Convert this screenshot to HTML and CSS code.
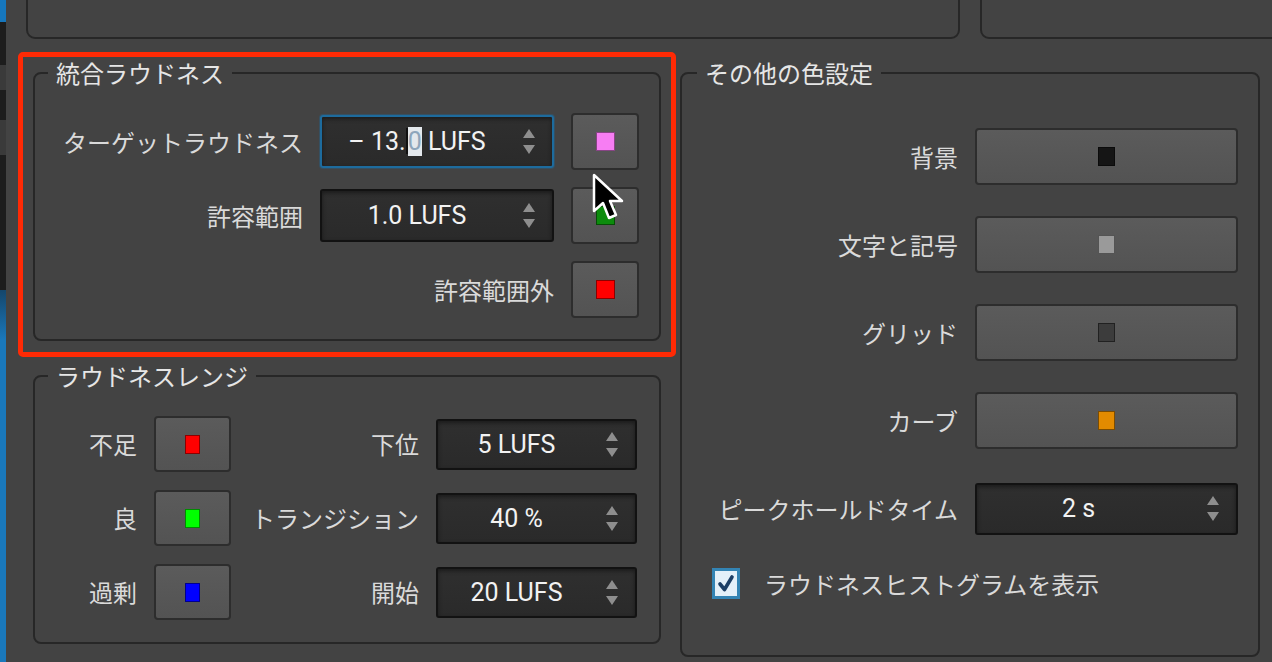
FILE: index.html
```html
<!DOCTYPE html>
<html>
<head>
  <meta charset="utf-8">
  <link rel="stylesheet" href="styles.css">
</head>
<body>
  <div class="window">
    <div class="edge"></div>

    <div class="content">
      <div class="top-row">
        <div class="top-panel left"></div>
        <div class="top-panel right"></div>
      </div>

      <div class="columns">
        <div class="col-left">
          <div class="highlight">
            <fieldset class="group">
              <legend>統合ラウドネス</legend>
              <div class="rows rows-int">
                <span class="label">ターゲットラウドネス</span>
                <div class="spin focused">
                  <span class="val">– 13.<span class="caret"></span><span class="sel">0</span> LUFS</span>
                  <span class="arrows"><i class="up"></i><i class="down"></i></span>
                </div>
                <button class="color-btn"><span class="swatch" style="background:#f77df3"></span></button>

                <span class="label">許容範囲</span>
                <div class="spin">
                  <span class="val">1.0 LUFS</span>
                  <span class="arrows"><i class="up"></i><i class="down"></i></span>
                </div>
                <button class="color-btn"><span class="swatch" style="background:#0c8c0c"></span></button>

                <span class="label wide">許容範囲外</span>
                <button class="color-btn"><span class="swatch" style="background:#ff0000"></span></button>
              </div>
            </fieldset>
          </div>

          <fieldset class="group g-range">
            <legend>ラウドネスレンジ</legend>
            <div class="rows rows-range">
              <span class="label">不足</span>
              <button class="color-btn"><span class="swatch small" style="background:#ff0000"></span></button>
              <span class="label">下位</span>
              <div class="spin">
                <span class="val">5 LUFS</span>
                <span class="arrows"><i class="up"></i><i class="down"></i></span>
              </div>

              <span class="label">良</span>
              <button class="color-btn"><span class="swatch small" style="background:#00ff00"></span></button>
              <span class="label">トランジション</span>
              <div class="spin">
                <span class="val">40 %</span>
                <span class="arrows"><i class="up"></i><i class="down"></i></span>
              </div>

              <span class="label">過剰</span>
              <button class="color-btn"><span class="swatch small" style="background:#0000ff"></span></button>
              <span class="label">開始</span>
              <div class="spin">
                <span class="val">20 LUFS</span>
                <span class="arrows"><i class="up"></i><i class="down"></i></span>
              </div>
            </div>
          </fieldset>
        </div>

        <fieldset class="group g-other">
          <legend>その他の色設定</legend>
          <div class="rows rows-other">
            <span class="label">背景</span>
            <button class="color-btn"><span class="swatch mid" style="background:#151515"></span></button>

            <span class="label">文字と記号</span>
            <button class="color-btn"><span class="swatch mid" style="background:#9a9a9a"></span></button>

            <span class="label">グリッド</span>
            <button class="color-btn"><span class="swatch mid" style="background:#3c3c3c"></span></button>

            <span class="label">カーブ</span>
            <button class="color-btn"><span class="swatch mid" style="background:#e38b00"></span></button>

            <span class="label">ピークホールドタイム</span>
            <div class="spin spin-wide">
              <span class="val">2 s</span>
              <span class="arrows"><i class="up"></i><i class="down"></i></span>
            </div>

            <label class="check-row">
              <svg class="checkbox" width="28" height="31" viewBox="0 0 28 31">
                <rect x="1.5" y="1.5" width="25" height="28" fill="#e3f0f9" stroke="#3384b4" stroke-width="3"/>
                <path d="M8 16 L12.5 21.5 L20 9" fill="none" stroke="#1c3f66" stroke-width="3.6" stroke-linecap="round" stroke-linejoin="round"/>
              </svg>
              <span>ラウドネスヒストグラムを表示</span>
            </label>
          </div>
        </fieldset>
      </div>
    </div>

    <svg class="cursor" width="36" height="52" viewBox="-2 -2 36 52">
      <path d="M0 0 L0 36 L9 28 L15 43 L22 40 L16 26 L28 26 Z" fill="#000" stroke="#fff" stroke-width="2.5" stroke-linejoin="round"/>
    </svg>
  </div>
</body>
</html>
```

FILE: styles.css
```css
body {
  margin: 0;
  background: #434343;
  font-family: "Noto Sans CJK JP", sans-serif;
  color: #dcdcdc;
  overflow: hidden;
}

.window {
  display: flex;
  height: 662px;
  position: relative;
  overflow: hidden;
}

.edge {
  width: 6px;
  flex-shrink: 0;
  background: linear-gradient(#1677bd 0, #1677bd 22px, #1d1d1d 22px, #1d1d1d 65px, #3a3a3a 65px, #3a3a3a 90px,
    #1d1d1d 90px, #1d1d1d 120px, #3a3a3a 120px, #3a3a3a 155px, #1d1d1d 155px, #1d1d1d 290px,
    #15466b 290px, #1a78bb 340px, #1a78bb 662px);
}

.content {
  flex: 1;
  min-width: 0;
}

.top-row {
  display: flex;
  gap: 20px;
  height: 69px;
  margin: -30px -20px 0 20px;
}

.top-panel {
  border: 2px solid #272727;
  border-radius: 0 0 9px 9px;
  box-sizing: border-box;
}

.top-panel.left {
  width: 934px;
}

.top-panel.right {
  flex: 1;
}

.columns {
  display: flex;
  align-items: flex-start;
  margin-top: 13px;
  padding-left: 12px;
}

.col-left {
  width: 658px;
  flex-shrink: 0;
}

.highlight {
  border: 5px solid #ff2a05;
  border-radius: 5px;
  padding: 1px 10px 11px;
}

fieldset.group {
  margin: 0;
  padding: 0;
  min-width: 0;
  border: 2px solid #272727;
  border-radius: 8px;
}

legend {
  margin-left: 13px;
  padding: 0 8px;
  font-size: 24px;
  line-height: 30px;
  color: #e6e6e6;
}

.g-range {
  margin: 4px 15px 0 !important;
}

.g-other {
  width: 580px;
  box-sizing: border-box;
  margin: 6px 0 0 4px !important;
}

.g-other legend {
  margin-left: 15px;
}

.rows {
  display: grid;
  align-items: center;
}

.rows-int {
  grid-template-columns: 1fr 234px 68px;
  grid-auto-rows: 57px;
  column-gap: 17px;
  row-gap: 17px;
  padding: 25px 20px 21px 0;
}

.rows-range {
  grid-template-columns: 102px 77px 1fr 201px;
  grid-auto-rows: 56px;
  column-gap: 17px;
  row-gap: 18px;
  padding: 25px 22px 22px 0;
}

.rows-other {
  grid-template-columns: 1fr 263px;
  grid-template-rows: repeat(5, 57px) 31px;
  column-gap: 17px;
  row-gap: 31px;
  padding: 40px 20px 56px 30px;
}

.label {
  font-size: 24px;
  line-height: 30px;
  text-align: right;
  white-space: nowrap;
  color: #dadada;
}

.label.wide {
  grid-column: 1 / 3;
}

.color-btn {
  height: 100%;
  display: flex;
  align-items: center;
  justify-content: center;
  padding: 0;
  background: linear-gradient(#5b5b5b, #535353);
  border: 2px solid #2d2d2d;
  border-radius: 4px;
  box-sizing: border-box;
  cursor: pointer;
}

.swatch {
  width: 19px;
  height: 19px;
  border: 1px solid rgba(0, 0, 0, 0.45);
  box-sizing: border-box;
}

.swatch.small {
  width: 15px;
  height: 19px;
}

.swatch.mid {
  width: 17px;
  height: 19px;
}

.spin {
  display: flex;
  align-items: center;
  height: 53px;
  box-sizing: border-box;
  border: 2px solid #121212;
  border-radius: 3px;
  background: linear-gradient(#2f2f2f, #2a2a2a);
  box-shadow: inset 0 2px 4px rgba(0, 0, 0, 0.45);
  font-family: Roboto, "Noto Sans", sans-serif;
  font-size: 25px;
  color: #f2f2f2;
}

.rows-range .spin {
  height: 51px;
}

.rows-other .spin {
  height: 52px;
}

.spin.focused {
  border-color: #1d6b9d;
  box-shadow: 0 0 0 1px rgba(29, 107, 157, 0.35), inset 0 2px 4px rgba(0, 0, 0, 0.45);
}

.spin-wide .val {
  padding-right: 16px;
}

.val {
  flex: 1;
  text-align: center;
  white-space: nowrap;
}

.caret {
  display: inline-block;
  width: 2px;
  height: 26px;
  background: #111;
  vertical-align: -4px;
}

.sel {
  background: #e3e8ec;
  color: #8ea6bb;
}

.arrows {
  display: flex;
  flex-direction: column;
  gap: 7px;
  margin: 0 17px 0 11px;
}

.arrows i {
  display: block;
  width: 0;
  height: 0;
  border-left: 6px solid transparent;
  border-right: 6px solid transparent;
}

.arrows .up {
  border-bottom: 9px solid #8e8e8e;
}

.arrows .down {
  border-top: 9px solid #8e8e8e;
}

.check-row {
  grid-column: 1 / 3;
  display: flex;
  align-items: center;
  gap: 24px;
  font-size: 24px;
  line-height: 30px;
  color: #dadada;
}

.checkbox {
  flex-shrink: 0;
}

.cursor {
  position: absolute;
  left: 592px;
  top: 173px;
}
```
